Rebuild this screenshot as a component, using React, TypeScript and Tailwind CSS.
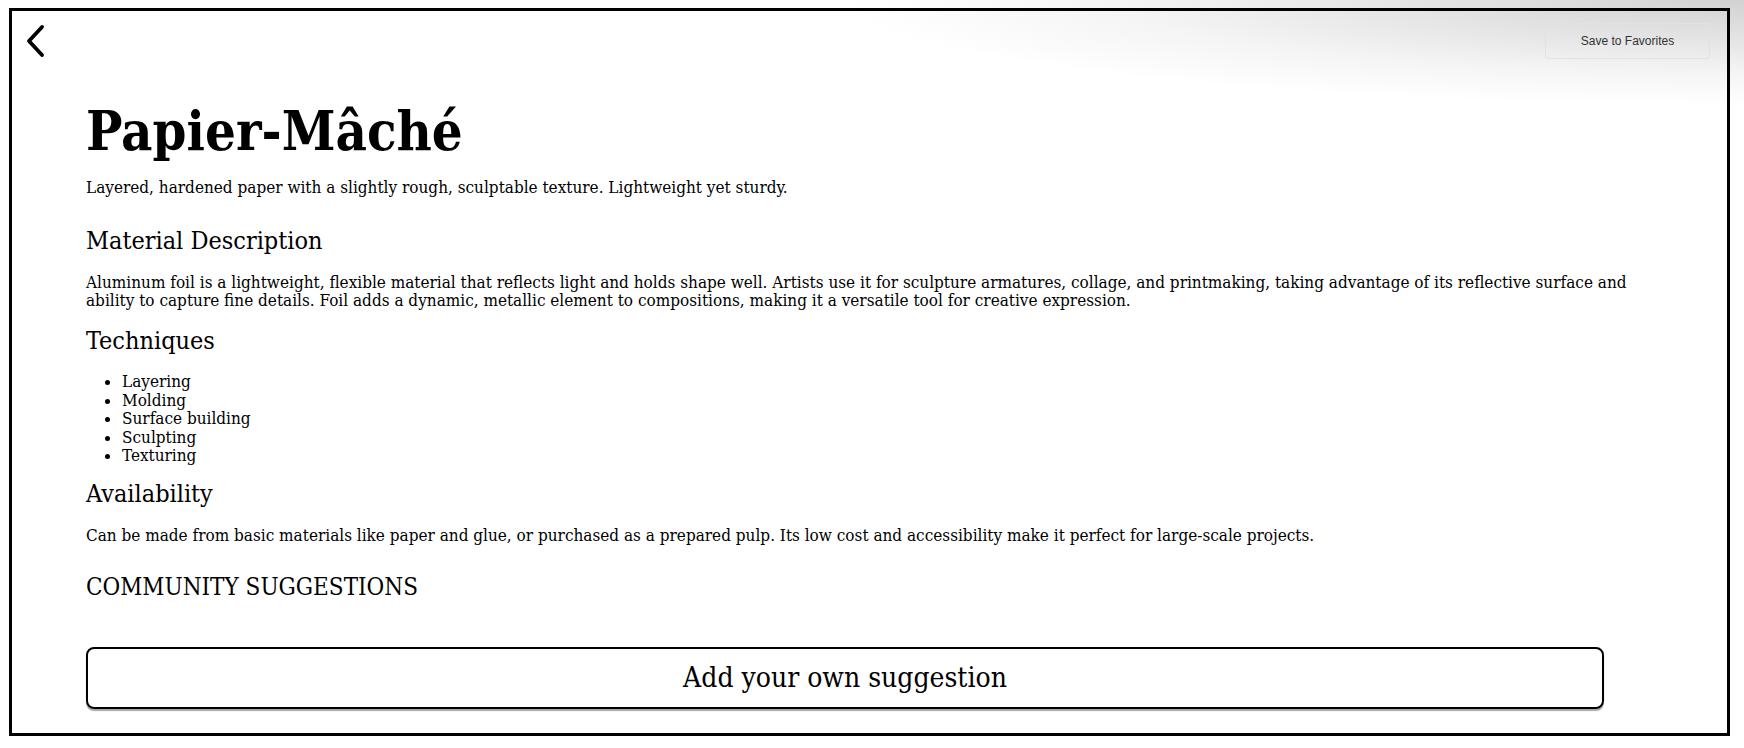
import React from 'react';

const techniques = ['Layering', 'Molding', 'Surface building', 'Sculpting', 'Texturing'];

const serif = { fontFamily: '"DejaVu Serif Condensed", "DejaVu Serif", serif' };

export default function App() {
  return (
    <div className="relative min-h-screen overflow-hidden bg-white pt-[8px] pr-[14px] pb-[12px] pl-[9px] text-black" style={serif}>
      {/* soft grey shade in the top right corner */}
      <div className="pointer-events-none absolute right-0 top-0 h-[120px] w-[950px] bg-[radial-gradient(ellipse_900px_105px_at_100%_0%,#d2d2d2_0%,#e3e3e3_35%,#f5f5f5_70%,rgba(255,255,255,0)_100%)]" />

      <div className="relative flex h-[728px] flex-col border-[3px] border-black">
        <div className="flex items-start justify-between pl-[12px] pr-[17px] pt-[12px]">
          <button className="mt-[1px] flex h-[34px] w-[22px] items-center justify-center">
            <svg width="20" height="34" viewBox="0 0 20 34" fill="none">
              <path d="M17 3 L4 17 L17 31" stroke="#000" strokeWidth="3.8" strokeLinecap="round" strokeLinejoin="round" />
            </svg>
          </button>
          <button
            className="h-[36px] w-[165px] rounded-[3px] border border-[#e2e2e2] text-[12px] text-[#333]"
            style={{ fontFamily: '"Liberation Sans", Arial, sans-serif' }}
          >
            Save to Favorites
          </button>
        </div>

        <div className="flex flex-col pl-[74px] pr-[80px]">
          <h1 className="mt-[42px] text-[54px] font-semibold leading-[60px]">Papier-Mâché</h1>
          <p className="mt-[17px] text-[17px] leading-[18px]">
            Layered, hardened paper with a slightly rough, sculptable texture. Lightweight yet sturdy.
          </p>

          <h2 className="mt-[31px] text-[25px] leading-[28px]">Material Description</h2>
          <p className="mt-[18px] text-[17px] leading-[18px]">
            Aluminum foil is a lightweight, flexible material that reflects light and holds shape well. Artists use it for sculpture armatures, collage, and printmaking, taking advantage of its reflective surface and ability to capture fine details. Foil adds a dynamic, metallic element to compositions, making it a versatile tool for creative expression.
          </p>

          <h2 className="mt-[18px] text-[25px] leading-[28px]">Techniques</h2>
          <ul className="mt-[17px] list-disc pl-[36px] text-[17px] leading-[18.5px]">
            {techniques.map((t) => (
              <li key={t}>{t}</li>
            ))}
          </ul>

          <h2 className="mt-[15px] text-[25px] leading-[28px]">Availability</h2>
          <p className="mt-[18px] text-[17px] leading-[18px]">
            Can be made from basic materials like paper and glue, or purchased as a prepared pulp. Its low cost and accessibility make it perfect for large-scale projects.
          </p>

          <h2 className="mt-[29px] text-[24px] uppercase leading-[28px]">Community Suggestions</h2>

          <button className="mt-[46px] h-[62px] w-[1518px] rounded-[8px] border-2 border-black text-[28px] shadow-[0_2px_1px_rgba(0,0,0,0.35)]">
            Add your own suggestion
          </button>
        </div>
      </div>
    </div>
  );
}
